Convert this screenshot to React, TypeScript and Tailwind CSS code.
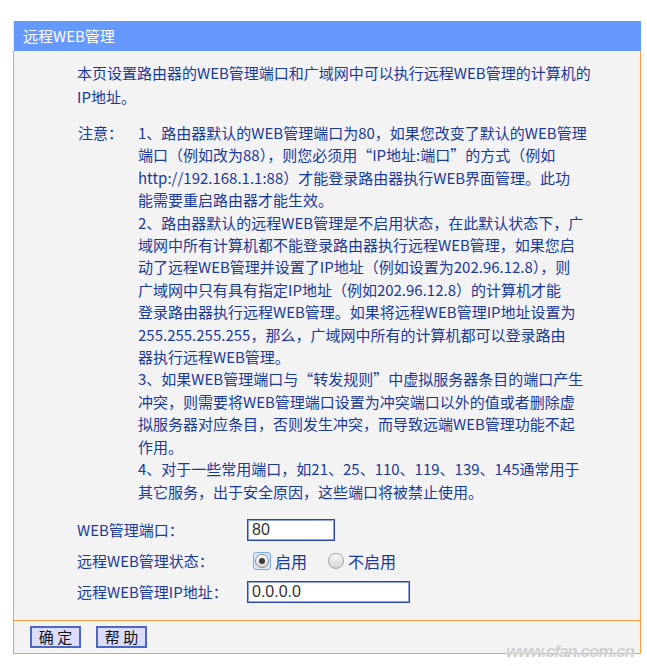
const cjk = "font-['Noto_Sans_CJK_SC',sans-serif]";

const intro = [
  "本页设置路由器的WEB管理端口和广域网中可以执行远程WEB管理的计算机的",
  "IP地址。",
];

const notes = [
  [
    "1、路由器默认的WEB管理端口为80，如果您改变了默认的WEB管理",
    "端口（例如改为88），则您必须用“IP地址:端口”的方式（例如",
    "http://192.168.1.1:88）才能登录路由器执行WEB界面管理。此功",
    "能需要重启路由器才能生效。",
  ],
  [
    "2、路由器默认的远程WEB管理是不启用状态，在此默认状态下，广",
    "域网中所有计算机都不能登录路由器执行远程WEB管理，如果您启",
    "动了远程WEB管理并设置了IP地址（例如设置为202.96.12.8），则",
    "广域网中只有具有指定IP地址（例如202.96.12.8）的计算机才能",
    "登录路由器执行远程WEB管理。如果将远程WEB管理IP地址设置为",
    "255.255.255.255，那么，广域网中所有的计算机都可以登录路由",
    "器执行远程WEB管理。",
  ],
  [
    "3、如果WEB管理端口与“转发规则”中虚拟服务器条目的端口产生",
    "冲突，则需要将WEB管理端口设置为冲突端口以外的值或者删除虚",
    "拟服务器对应条目，否则发生冲突，而导致远端WEB管理功能不起",
    "作用。",
  ],
  [
    "4、对于一些常用端口，如21、25、110、119、139、145通常用于",
    "其它服务，出于安全原因，这些端口将被禁止使用。",
  ],
];

function Radio({ checked, label }: { checked?: boolean; label: string }) {
  return (
    <label className="flex items-center">
      {checked ? (
        <span className="flex h-[18px] w-[18px] items-center justify-center rounded-[3px] border border-[#7fa9ea] bg-[#d9e6fa]">
          <span className="flex h-[14px] w-[14px] items-center justify-center rounded-full border border-[#8c8c8c] bg-gradient-to-b from-white to-[#d6d6d6]">
            <span className="h-[6px] w-[6px] rounded-full bg-[#3a3a3a]" />
          </span>
        </span>
      ) : (
        <span className="h-[16px] w-[16px] rounded-full border border-[#a2a2a2] bg-gradient-to-b from-[#fafafa] to-[#d4d4d4]" />
      )}
      <span className={`ml-[4px] text-[16px] text-[#1a3a98] ${cjk}`}>{label}</span>
    </label>
  );
}

function TextBox({ value, width }: { value: string; width: string }) {
  return (
    <div
      className={`flex h-[22px] ${width} items-center border border-[#2846a8] bg-white pl-[4px] font-['Liberation_Sans',sans-serif] text-[16px] text-[#333] shadow-[inset_0_0_0_1px_#8fa3de]`}
    >
      {value}
    </div>
  );
}

function Button({ label }: { label: string }) {
  return (
    <button className={`flex h-[22px] w-[51px] items-center justify-center border-2 border-[#4b66c4] bg-[#dcdcfb] text-[15px] text-[#111] ${cjk}`}>
      {label}
    </button>
  );
}

export default function App() {
  return (
    <div className="relative h-[666px] w-[647px] overflow-hidden bg-white pt-[21px]">
      <div className="ml-[13px] w-[628px]">
        {/* title bar */}
        <div className={`flex h-[30px] items-center border-l border-[#dfe8ff] bg-[#6699ff] pl-[9px] text-[15px] text-white ${cjk}`}>
          远程WEB管理
        </div>

        <div className="border-x border-b border-[#ff9c3e] bg-[#f3f3f3]">
          <div className={`px-[63px] pt-[10px] pb-[12px] text-[15px] text-[#1a3a98] ${cjk}`}>
            <div className="leading-[24px]">
              {intro.map((l) => (
                <div key={l} className="whitespace-nowrap">{l}</div>
              ))}
            </div>

            <div className="mt-[13px] flex leading-[22.4px]">
              <div className="w-[61px] shrink-0 pl-[1px]">注意：</div>
              <div>
                {notes.map((item, i) => (
                  <div key={i}>
                    {item.map((l) => (
                      <div key={l} className="whitespace-nowrap">{l}</div>
                    ))}
                  </div>
                ))}
              </div>
            </div>

            <div className="mt-[12px]">
              <div className="flex h-[31px] items-center">
                <div className="w-[170px]">WEB管理端口：</div>
                <TextBox value="80" width="w-[88px]" />
              </div>
              <div className="flex h-[31px] items-center">
                <div className="w-[176px]">远程WEB管理状态：</div>
                <Radio checked label="启用" />
                <div className="w-[21px]" />
                <Radio label="不启用" />
              </div>
              <div className="flex h-[31px] items-center">
                <div className="w-[170px]">远程WEB管理IP地址：</div>
                <TextBox value="0.0.0.0" width="w-[163px]" />
              </div>
            </div>
          </div>

          <div className="flex h-[33px] items-center gap-[15px] border-t border-[#ff9c3e] pl-[16px]">
            <Button label="确 定" />
            <Button label="帮 助" />
          </div>
        </div>
      </div>

      {/* watermark */}
      <div className="absolute left-[506px] top-[639px] whitespace-nowrap font-['Liberation_Sans',sans-serif] text-[17px] font-bold italic tracking-[-1px] text-[#cfcfcf] [text-shadow:0_0_1px_#fff]">
        www.cfan.com.cn
      </div>
    </div>
  );
}
